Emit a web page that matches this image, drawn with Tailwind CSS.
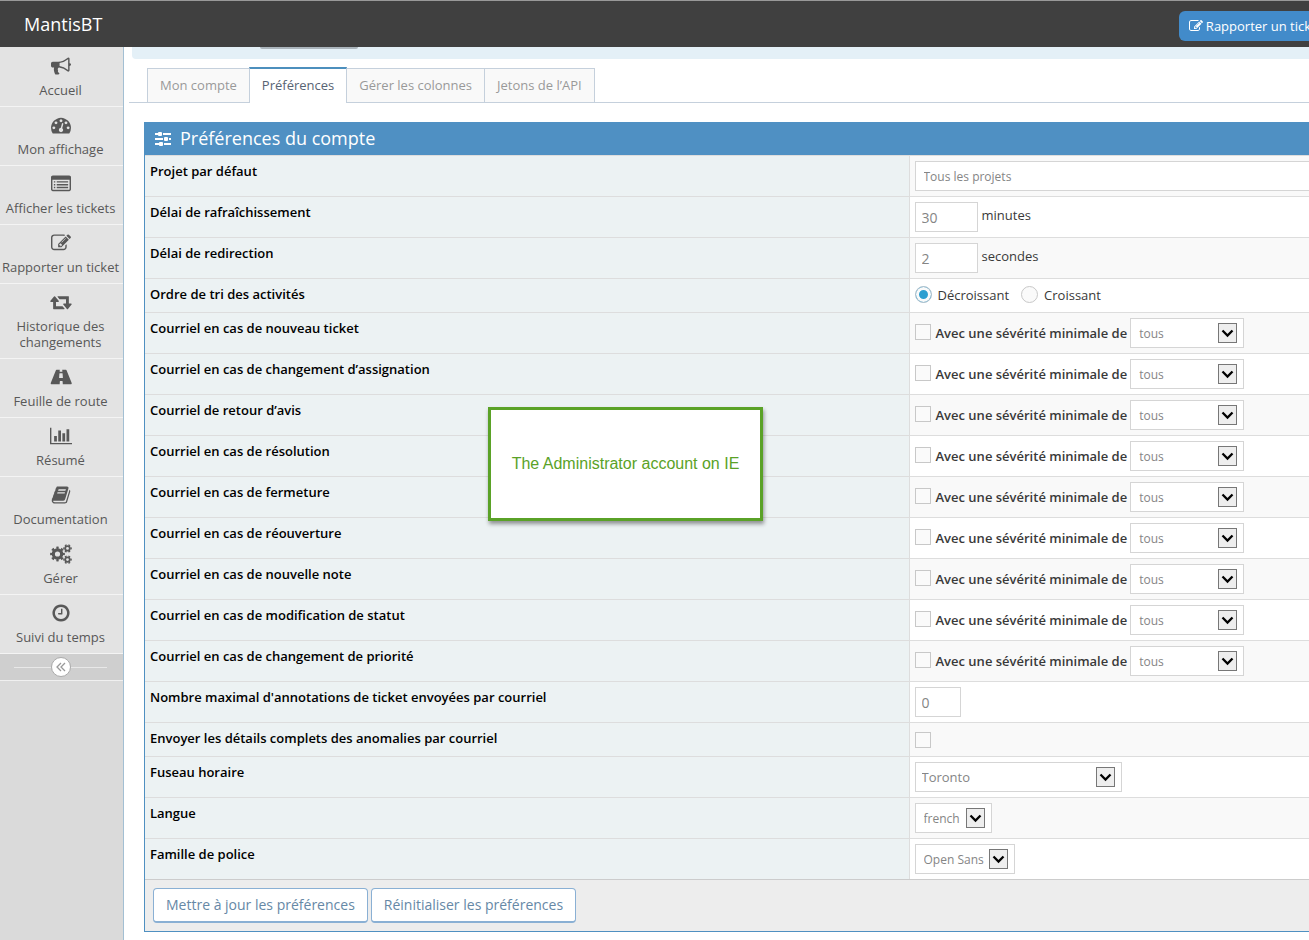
<!DOCTYPE html>
<html lang="fr">
<head>
    <meta charset="UTF-8">
    <meta name="viewport" content="width=device-width, initial-scale=1.0">
    <title>Préférences du compte - MantisBT</title>
    <script src="https://cdn.jsdelivr.net/npm/@tailwindcss/browser@4"></script>
</head>
<body class="min-h-screen flex flex-col overflow-x-hidden bg-white font-['Open_Sans',sans-serif] text-[13px] leading-5 text-[#393939]">

    <!-- Icons -->
    <svg class="hidden">
        <symbol id="i-bullhorn" viewBox="0 0 1792 1792"><path d="M1664 640q53 0 90.5 37.5t37.5 90.5-37.5 90.5-90.5 37.5v384q0 52-38 90t-90 38q-417-347-812-380-58 19-91 66t-31 100.5 40 92.5q-20 33-23 65.5t6 58 33.5 55 48 50 61.5 50.5q-29 58-111.5 83t-168.5 11.5-132-55.5q-7-23-29.5-87.5t-32-94.5-23-89-15-101 3.5-98 22-110.5h-122q-66 0-113-47t-47-113v-192q0-66 47-113t113-47h480q435 0 896-384 52 0 90 38t38 90v384zm-128 604v-954q-394 302-768 343v270q377 42 768 341z"/></symbol>
        <symbol id="i-dashboard" viewBox="0 0 1792 1792"><path d="M384 1152q0-53-37.5-90.5t-90.5-37.5-90.5 37.5-37.5 90.5 37.5 90.5 90.5 37.5 90.5-37.5 37.5-90.5zm192-448q0-53-37.5-90.5t-90.5-37.5-90.5 37.5-37.5 90.5 37.5 90.5 90.5 37.5 90.5-37.5 37.5-90.5zm428 481l101-382q6-26-7.5-48.5t-38.5-29.5-48 6.5-30 39.5l-101 382q-60 5-107 43.5t-63 98.5q-20 77 20 146t117 89 146-20 89-117q16-60-6-117t-72-91zm660-33q0-53-37.5-90.5t-90.5-37.5-90.5 37.5-37.5 90.5 37.5 90.5 90.5 37.5 90.5-37.5 37.5-90.5zm-640-640q0-53-37.5-90.5t-90.5-37.5-90.5 37.5-37.5 90.5 37.5 90.5 90.5 37.5 90.5-37.5 37.5-90.5zm448 192q0-53-37.5-90.5t-90.5-37.5-90.5 37.5-37.5 90.5 37.5 90.5 90.5 37.5 90.5-37.5 37.5-90.5zm320 448q0 261-141 483-19 29-54 29h-1402q-35 0-54-29-141-221-141-483 0-182 71-348t191-286 286-191 348-71 348 71 286 191 191 286 71 348z"/></symbol>
        <symbol id="i-list" viewBox="0 0 1792 1792"><path fill-rule="evenodd" d="M160 128h1472q66 0 113 47t47 113v1088q0 66-47 113t-113 47h-1472q-66 0-113-47t-47-113v-1088q0-66 47-113t113-47zM128 512v864q0 32 32 32h1472q32 0 32-32v-864zM256 640h128v128h-128zM512 640h1024v128h-1024zM256 896h128v128h-128zM512 896h1024v128h-1024zM256 1152h128v128h-128zM512 1152h1024v128h-1024z"/></symbol>
        <symbol id="i-edit" viewBox="0 0 1792 1792"><path d="M888 1184l116-116-152-152-116 116v56h96v96h56zm440-720q-16-16-33 1l-350 350q-17 17-1 33t33-1l350-350q17-17 1-33zm80 594v190q0 119-84.5 203.5t-203.5 84.5h-832q-119 0-203.5-84.5t-84.5-203.5v-832q0-119 84.5-203.5t203.5-84.5h832q63 0 117 25 15 7 18 23 3 17-9 29l-49 49q-14 14-32 8-23-6-45-6h-832q-66 0-113 47t-47 113v832q0 66 47 113t113 47h832q66 0 113-47t47-113v-126q0-13 9-22l64-64q15-15 35-7t20 29zm-96-738l288 288-672 672h-288v-288zm444 132l-92 92-288-288 92-92q28-28 68-28t68 28l152 152q28 28 28 68t-28 68z"/></symbol>
        <symbol id="i-retweet" viewBox="0 0 1920 1792"><path d="M1280 1504q0 13-9.5 22.5t-22.5 9.5h-960q-8 0-13.5-2t-9-7-5.5-8-3-11.5-1-11.5v-600h-192q-26 0-45-19t-19-45q0-24 15-41l320-384q19-22 49-22t49 22l320 384q15 17 15 41 0 26-19 45t-45 19h-192v384h576q16 0 25 11l160 192q7 10 7 21zm640-416q0 24-15 41l-320 384q-20 23-49 23t-49-23l-320-384q-15-17-15-41 0-26 19-45t45-19h192v-384h-576q-16 0-25-12l-160-192q-7-9-7-20 0-13 9.5-22.5t22.5-9.5h960q8 0 13.5 2t9 7 5.5 8 3 11.5 1 11.5v600h192q26 0 45 19t19 45z"/></symbol>
        <symbol id="i-road" viewBox="0 0 1920 1792"><path fill-rule="evenodd" d="M520 256h330l-12 150q-2 26 24 26h196q26 0 24-26l-12-150h330q44 0 66 54l444 1112q42 114-46 114h-744l-18-256q-2-26-28-26h-188q-26 0-28 26l-18 256h-744q-88 0-46-114l444-1112q22-54 66-54zM846 560q-26 0-28 26l-28 380q-2 26 24 26h292q26 0 24-26l-28-380q-2-26-28-26z"/></symbol>
        <symbol id="i-chart" viewBox="0 0 2048 1792"><path d="M640 896v512h-256v-512h256zm384-512v1024h-256v-1024h256zm1024 1152v128h-2048v-1536h128v1408h1920zm-640-896v768h-256v-768h256zm384-384v1152h-256v-1152h256z"/></symbol>
        <symbol id="i-book" viewBox="0 0 1792 1792"><path d="M1703 478q40 57 18 129l-275 906q-19 64-76.5 107.5t-122.5 43.5h-923q-77 0-148.5-53.5t-99.5-131.5q-24-67-2-127 0-4 3-27t4-37q1-8-3-21.5t-3-19.5q2-11 8-21t16.5-23.5 16.5-23.5q23-38 45-91.5t30-91.5q3-10 .5-30t-.5-28q3-11 17-28t17-23q21-36 42-92t25-90q1-9-2.5-32t.5-28q4-13 22-30.5t22-22.5q19-26 42.5-84.5t27.5-96.5q1-8-3-25.5t-2-26.5q2-8 9-18t18-23 17-21q8-12 16.5-30.5t15-35 16-36 19.5-32 26.5-23.5 36-11.5 47.5 5.5l-1 3q38-9 51-9h761q74 0 114 56t18 130l-274 906q-36 119-71.5 153.5t-128.5 34.5h-869q-27 0-38 15-11 16-1 43 24 70 144 70h923q29 0 56-15.5t35-41.5l300-987q7-22 5-57 38 15 59 43zm-1064 2q-4 13 2 22.5t20 9.5h608q13 0 25.5-9.5t16.5-22.5l21-64q4-13-2-22.5t-20-9.5h-608q-13 0-25.5 9.5t-16.5 22.5zm-83 256q-4 13 2 22.5t20 9.5h608q13 0 25.5-9.5t16.5-22.5l21-64q4-13-2-22.5t-20-9.5h-608q-13 0-25.5 9.5t-16.5 22.5z"/></symbol>
        <symbol id="i-cogs" viewBox="0 0 22 20">
            <g fill="none" stroke="currentColor">
                <circle cx="7.5" cy="10" r="4.2" stroke-width="3.2"/>
                <circle cx="7.5" cy="10" r="6.2" stroke-width="2.4" pathLength="16" stroke-dasharray="1 1" stroke-dashoffset=".5"/>
                <circle cx="17.5" cy="4.4" r="2.3" stroke-width="1.8"/>
                <circle cx="17.5" cy="4.4" r="3.6" stroke-width="1.4" pathLength="12" stroke-dasharray="1 1" stroke-dashoffset=".5"/>
                <circle cx="17.5" cy="15.6" r="2.3" stroke-width="1.8"/>
                <circle cx="17.5" cy="15.6" r="3.6" stroke-width="1.4" pathLength="12" stroke-dasharray="1 1" stroke-dashoffset=".5"/>
            </g>
        </symbol>
        <symbol id="i-clock" viewBox="0 0 1792 1792"><path d="M1024 544v448q0 14-9 23t-23 9h-320q-14 0-23-9t-9-23v-64q0-14 9-23t23-9h224v-352q0-14 9-23t23-9h64q14 0 23 9t9 23zm416 352q0-148-73-273t-198-198-273-73-273 73-198 198-73 273 73 273 198 198 273 73 273-73 198-198 73-273zm224 0q0 209-103 385.5t-279.5 279.5-385.5 103-385.5-103-279.5-279.5-103-385.5 103-385.5 279.5-279.5 385.5-103 385.5 103 279.5 279.5 103 385.5z"/></symbol>
        <symbol id="i-sliders" viewBox="0 0 16 16"><path d="M0 2h3v2H0zM8 2h8v2H8zM0 7h8v2H0zM14 7h2v2h-2zM0 12h4v2H0zM9 12h7v2H9z"/><rect x="3" y="1" width="4" height="4" rx="1"/><rect x="9" y="6" width="4" height="4" rx="1"/><rect x="4" y="11" width="4" height="4" rx="1"/></symbol>
        <symbol id="i-arrow" viewBox="0 0 17 18"><path d="M3.500 6.500L8.500 11.500L13.500 6.500" fill="none" stroke="#000" stroke-width="2.300"/></symbol>
    </svg>

    <!-- Navbar -->
    <header class="h-[47px] shrink-0 flex items-center justify-between overflow-hidden border-t border-[#999] bg-[#404040] pl-6 text-white">
        <a href="#" class="text-lg">MantisBT</a>
        <a href="#" class="-mr-6 mt-1 flex h-[30px] items-center gap-[3px] whitespace-nowrap rounded-md bg-[#428bca] px-2.5">
            <svg class="size-3.5 fill-current"><use href="#i-edit"/></svg>
            Rapporter un ticket
        </a>
    </header>

    <div class="flex grow">
        <!-- Sidebar -->
        <nav class="w-[124px] shrink-0 border-r border-[#a3bfd3] bg-[#dadada]">
            <ul id="menu" class="border-t border-[#e3e3e3]"></ul>
            <div class="flex h-[27px] items-center border-b border-[#f0f0f0] bg-[#cfcfcf] pl-3.5 pr-4">
                <span class="h-px grow bg-[#e8e8e8]"></span>
                <button type="button" aria-label="Réduire le menu" class="flex size-5 items-center justify-center rounded-full border border-[#aaa] bg-white">
                    <svg class="size-3" viewBox="0 0 12 12" fill="none" stroke="#999" stroke-width="1.300"><path d="M6 2L2 6L6 10M10 2L6 6L10 10"/></svg>
                </button>
                <span class="h-px grow bg-[#e8e8e8]"></span>
            </div>
        </nav>

        <main class="min-w-0 grow overflow-hidden">
            <div class="ml-2 h-3 rounded-bl bg-[#e4f0f7] pl-32"><div class="h-0.5 w-[98px] rounded-b bg-[#abb5bc]"></div></div>

            <div class="ml-[5px] mt-2 flex items-end border-b border-[#c5d0dc] pl-[18px] text-[#999]">
                <a href="#" class="h-[34px] border-l border-t border-[#c5d0dc] bg-[#f9f9f9] px-3 pt-1.5">Mon compte</a>
                <a href="#" class="-mb-px h-9 border-x border-t-2 border-x-[#c5d0dc] border-t-[#4c8fbd] bg-white px-3 pt-1.5 text-[#576373]">Préférences</a>
                <a href="#" class="h-[34px] border-t border-[#c5d0dc] bg-[#f9f9f9] px-3 pt-1.5">Gérer les colonnes</a>
                <a href="#" class="h-[34px] border-x border-t border-[#c5d0dc] bg-[#f9f9f9] px-3 pt-1.5">Jetons de l’API</a>
            </div>

            <!-- Preferences -->
            <form class="relative ml-5 mt-[19px] border-b border-l border-[#4f90c1] bg-[#ededed]">
                <h4 class="flex h-[33px] items-center gap-[9px] bg-[#4f90c3] pb-px pl-2.5 text-lg text-white">
                    <svg class="mt-0.5 size-4 fill-current"><use href="#i-sliders"/></svg>
                    Préférences du compte
                </h4>
                <table class="w-full table-fixed border-collapse text-left">
                    <tbody id="prefs"></tbody>
                </table>
                <div class="flex gap-[3px] border-t border-[#ccc] px-2 py-2 text-sm">
                    <button type="submit" class="h-[35px] rounded border border-b-2 border-[#8ab0d4] bg-white px-3 text-[#6688a6]">Mettre à jour les préférences</button>
                    <button type="reset" class="h-[35px] rounded border border-b-2 border-[#8ab0d4] bg-white px-3 text-[#6688a6]">Réinitialiser les préférences</button>
                </div>

                <div class="absolute left-[343px] top-[285px] flex h-[114px] w-[275px] items-center justify-center border-3 border-[#5aa227] bg-white font-['Liberation_Sans',sans-serif] text-base text-[#5aa227] shadow-[1px_3px_4px_rgba(0,0,0,0.4)]">The Administrator account on IE</div>
            </form>
        </main>
    </div>

    <script>
        const menu = [
            ['bullhorn', 'Accueil'],
            ['dashboard', 'Mon affichage'],
            ['list', 'Afficher les tickets'],
            ['edit', 'Rapporter un ticket'],
            ['retweet', 'Historique des changements'],
            ['road', 'Feuille de route'],
            ['chart', 'Résumé'],
            ['book', 'Documentation'],
            ['cogs', 'Gérer'],
            ['clock', 'Suivi du temps']
        ];

        document.getElementById('menu').innerHTML = menu.map(([icon, text]) => `
            <li class="border-b border-[#f4f4f4] bg-[#e3e3e3]">
                <a href="#" class="flex flex-col items-center pb-2 pr-0.5 pt-[7px] text-center leading-4 text-[#585858]">
                    <svg class="mb-[5px] h-[22px] w-6 fill-current p-px"><use href="#i-${icon}"/></svg>
                    ${text}
                </a>
            </li>`).join('');

        // select with its drop-down button drawn over the right end
        function select(id, value, width, text = 'pl-2 pt-0.5 text-xs') {
            return `<span class="inline-grid shrink-0 items-center ${width}">
                <select id="${id}" class="col-start-1 row-start-1 h-[30px] w-full appearance-none border border-[#d5d5d5] bg-white text-[#858585] ${text}"><option>${value}</option></select>
                <svg class="pointer-events-none col-start-1 row-start-1 mr-[7px] h-5 w-[19px] justify-self-end border border-[#777] bg-[#eee]"><use href="#i-arrow"/></svg>
            </span>`;
        }

        function number(id, value, width) {
            return `<input type="text" id="${id}" value="${value}" class="h-[30px] border border-[#d5d5d5] bg-white pl-1.5 text-sm text-[#858585] ${width}">`;
        }

        function check(id) {
            return `<input type="checkbox" id="${id}" class="size-4 appearance-none border border-[#c8c8c8] bg-[#fafafa]">`;
        }

        const emails = [
            'Courriel en cas de nouveau ticket',
            'Courriel en cas de changement d’assignation',
            'Courriel de retour d’avis',
            'Courriel en cas de résolution',
            'Courriel en cas de fermeture',
            'Courriel en cas de réouverture',
            'Courriel en cas de nouvelle note',
            'Courriel en cas de modification de statut',
            'Courriel en cas de changement de priorité'
        ];

        // [id, label, control, row height]
        const rows = [
            ['project', 'Projet par défaut', select('project', 'Tous les projets', 'w-[130%]')],
            ['refresh', 'Délai de rafraîchissement', number('refresh', 30, 'w-[63px]') + '<span class="-mt-1 ml-1">minutes</span>'],
            ['redirect', 'Délai de redirection', number('redirect', 2, 'w-[63px]') + '<span class="-mt-1 ml-1">secondes</span>'],
            ['order', 'Ordre de tri des activités', `
                <label class="flex items-center gap-1.5 pb-0.5"><input type="radio" id="order" name="order" checked class="size-[17px] appearance-none rounded-full border border-[#b5c2cc] bg-[#fafafa] checked:bg-[#2e9fd0] checked:shadow-[inset_0_0_0_3px_#fafafa]">Décroissant</label>
                <label class="ml-3 flex items-center gap-1.5 pb-0.5"><input type="radio" name="order" class="size-[17px] appearance-none rounded-full border border-[#c8c8c8] bg-[#fafafa]">Croissant</label>`, 'h-[34px]'],
            ...emails.map((text, i) => [`email-${i}`, text,
                `<span class="-mt-0.5 flex">${check('email-' + i)}</span>
                <label for="severity-${i}" class="ml-[5px] mr-[3px] whitespace-nowrap font-semibold">Avec une sévérité minimale de</label>
                ${select('severity-' + i, 'tous', 'w-[114px]')}`]),
            ['notes', "Nombre maximal d'annotations de ticket envoyées par courriel", number('notes', 0, 'w-[46px]')],
            ['full', 'Envoyer les détails complets des anomalies par courriel', check('full'), 'h-[34px]'],
            ['timezone', 'Fuseau horaire', select('timezone', 'Toronto', 'w-[207px]', 'pl-1.5 text-[13px]')],
            ['language', 'Langue', select('language', 'french', 'w-[77px]')],
            ['font', 'Famille de police', select('font', 'Open Sans', 'w-[100px]'), 'h-10']
        ];

        document.getElementById('prefs').innerHTML = rows.map(([id, text, control, height = 'h-[41px]']) => `
            <tr class="border-t border-[#ddd] bg-white odd:bg-[#f9f9f9] ${height}">
                <th class="w-[764px] border-r border-[#ddd] bg-[#ecf2f3] px-[5px] pt-[5px] align-top font-semibold text-black"><label for="${id}">${text}</label></th>
                <td class="p-0 pl-[5px]"><div class="flex items-center">${control}</div></td>
            </tr>`).join('');
    </script>

</body>
</html>
